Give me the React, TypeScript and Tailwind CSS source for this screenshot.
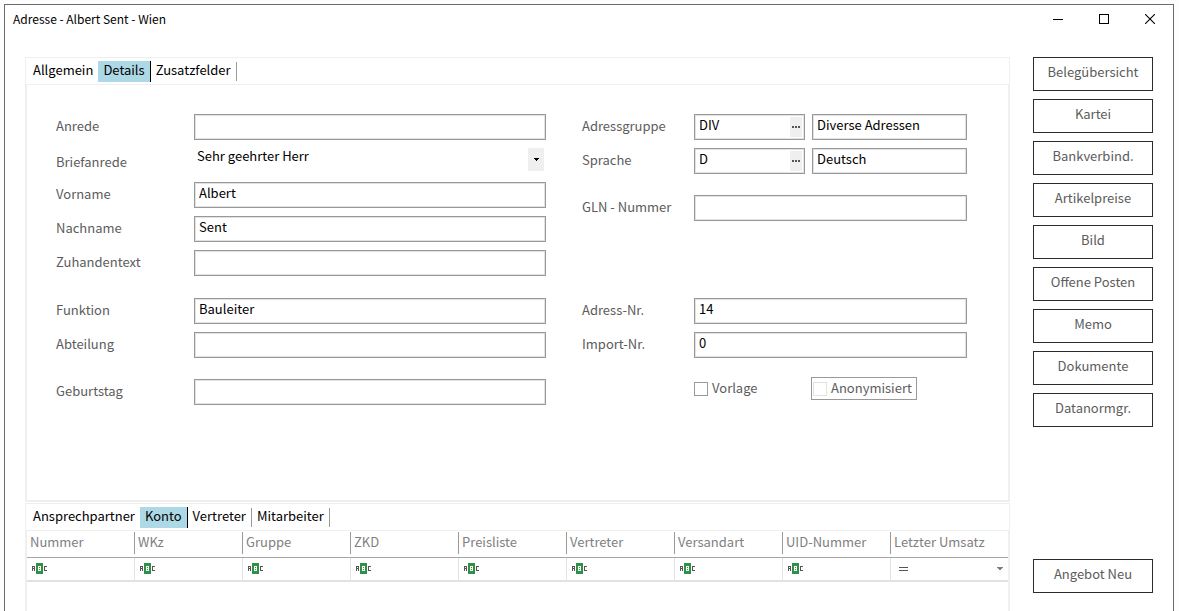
import { useState, type ReactNode } from "react";

const sideButtons = [
  "Belegübersicht",
  "Kartei",
  "Bankverbind.",
  "Artikelpreise",
  "Bild",
  "Offene Posten",
  "Memo",
  "Dokumente",
  "Datanormgr.",
];

const columns = [
  "Nummer",
  "WKz",
  "Gruppe",
  "ZKD",
  "Preisliste",
  "Vertreter",
  "Versandart",
  "UID-Nummer",
  "Letzter Umsatz",
];

const box = "h-[26px] w-full min-w-0 border border-[#999999] bg-white shadow-[inset_0_0_0_1px_#e2e2e2]";

function Row({ id, label, children }: { id: string; label: string; children: ReactNode }) {
  return (
    <div className="flex items-center">
      <label htmlFor={id} className="w-[112px] shrink-0 pb-[2px] text-[#5c5c5c]">
        {label}
      </label>
      <div className="min-w-0 flex-1">{children}</div>
    </div>
  );
}

function WideRow({ id, label, children }: { id: string; label: string; children: ReactNode }) {
  return (
    <div className="flex items-center">
      <label htmlFor={id} className="w-[138px] shrink-0 pb-[2px] text-[#5c5c5c]">
        {label}
      </label>
      <div className="min-w-0 flex-1">{children}</div>
    </div>
  );
}

function TextBox({ id, label, value = "" }: { id: string; label?: string; value?: string }) {
  return (
    <input
      id={id}
      type="text"
      aria-label={label}
      defaultValue={value}
      className={`${box} px-1 pb-[5px] text-black outline-none`}
    />
  );
}

function LookupBox({ id, value }: { id: string; value: string }) {
  return (
    <div className={`${box} flex items-center pr-[2px] pl-1`}>
      <input id={id} type="text" defaultValue={value} className="min-w-0 flex-1 pb-1 text-black outline-none" />
      <button type="button" aria-label="Auswahl" className="flex h-5 w-3 items-center justify-center bg-[#efefef]">
        <svg width="8" height="2" shapeRendering="crispEdges" fill="#555555">
          <rect x="0" width="2" height="2" />
          <rect x="3" width="2" height="2" />
          <rect x="6" width="2" height="2" />
        </svg>
      </button>
    </div>
  );
}

function Tabs({ items, initial }: { items: string[]; initial: string }) {
  const [active, setActive] = useState(initial);
  const activeIndex = items.indexOf(active);
  return (
    <div className="flex h-[26px] items-center pl-[2px]">
      {items.map((item, i) => (
        <button
          key={item}
          type="button"
          onClick={() => setActive(item)}
          className={
            i === activeIndex
              ? "h-[21px] border-r border-black bg-[#add8e6] px-[5px] pb-[3px] leading-[18px] text-black"
              : i === activeIndex - 1
                ? "h-[21px] px-[5px] pb-[3px] leading-[18px] text-black"
                : "h-[19px] border-r border-[#999999] px-[5px] pb-[3px] leading-4 text-black"
          }
        >
          {item}
        </button>
      ))}
    </div>
  );
}

/* Filter icon: A, highlighted B, C */
function AbcIcon() {
  return (
    <svg width="16" height="11" shapeRendering="crispEdges">
      <path d="M0 3h3v5h-1v-2h-1v2h-1zM1 4v1h1v-1z" fill="#555555" fillRule="evenodd" />
      <rect x="4" y="0" width="7" height="11" fill="#2f9148" />
      <path d="M6 3h3v5h-3z" fill="#ffffff" />
      <path d="M7 4h1v1h-1zM7 6h1v1h-1z" fill="#2f9148" />
      <path d="M12 3h3v1h-2v3h2v1h-3z" fill="#555555" />
    </svg>
  );
}

export default function App() {
  return (
    <div className="flex min-h-screen flex-col bg-[#fdfdfd] pt-1 pr-[5px] pl-1 font-['Noto_Sans_CJK_SC','Noto_Sans',sans-serif] text-[13px] leading-5">
      <div className="flex flex-1 flex-col border border-b-0 border-[#6b6b6b] bg-white">
        {/* Title bar */}
        <header className="flex h-7 items-center justify-between pl-2">
          <h1 className="text-xs text-black">Adresse - Albert Sent - Wien</h1>
          <div className="flex">
            <button type="button" aria-label="Minimieren" className="flex h-7 w-[46px] items-center justify-center">
              <svg width="10" height="10" shapeRendering="crispEdges">
                <path d="M0 5h10v1h-10z" />
              </svg>
            </button>
            <button type="button" aria-label="Maximieren" className="flex h-7 w-[46px] items-center justify-center">
              <svg width="10" height="10" shapeRendering="crispEdges">
                <rect x="0.5" y="0.5" width="9" height="9" fill="none" stroke="black" />
              </svg>
            </button>
            <button type="button" aria-label="Schließen" className="flex h-7 w-[46px] items-center justify-center">
              <svg width="10" height="10">
                <path d="M0 0l10 10M10 0l-10 10" stroke="black" strokeWidth="1.1" />
              </svg>
            </button>
          </div>
        </header>

        <div className="flex flex-1 gap-[23px] px-5 pt-6">
          <main className="flex min-w-0 flex-1 flex-col gap-px">
            {/* Address details */}
            <section className="border border-[#efefef]">
              <Tabs items={["Allgemein", "Details", "Zusatzfelder"]} initial="Details" />
              <form className="grid grid-cols-[490fr_385fr] gap-9 border border-[#efefef] pt-[29px] pr-[41px] pb-[95px] pl-[29px]">
                <div className="flex min-w-0 flex-col gap-2">
                  <WideRow id="anrede" label="Anrede">
                    <TextBox id="anrede" />
                  </WideRow>
                  <div className="flex h-[26px]">
                    <label htmlFor="briefanrede" className="w-[138px] shrink-0 pt-1 text-[#5c5c5c]">
                      Briefanrede
                    </label>
                    <div className="relative flex-1">
                      <select
                        id="briefanrede"
                        className="block h-4 w-full appearance-none bg-white px-[3px] leading-4 text-black outline-none"
                      >
                        <option>Sehr geehrter Herr</option>
                        <option>Sehr geehrte Frau</option>
                      </select>
                      <span className="pointer-events-none absolute top-0 right-[2px] flex h-[23px] w-4 items-center justify-center bg-[#efefef]">
                        <svg width="5" height="3" shapeRendering="crispEdges">
                          <path d="M0 0h5v1h-5zM1 1h3v1h-3zM2 2h1v1h-1z" />
                        </svg>
                      </span>
                    </div>
                  </div>
                  <WideRow id="vorname" label="Vorname">
                    <TextBox id="vorname" value="Albert" />
                  </WideRow>
                  <WideRow id="nachname" label="Nachname">
                    <TextBox id="nachname" value="Sent" />
                  </WideRow>
                  <WideRow id="zuhanden" label="Zuhandentext">
                    <TextBox id="zuhanden" />
                  </WideRow>
                  <div className="mt-[14px] flex flex-col gap-2">
                    <WideRow id="funktion" label="Funktion">
                      <TextBox id="funktion" value="Bauleiter" />
                    </WideRow>
                    <WideRow id="abteilung" label="Abteilung">
                      <TextBox id="abteilung" />
                    </WideRow>
                  </div>
                  <div className="mt-[13px]">
                    <WideRow id="geburtstag" label="Geburtstag">
                      <TextBox id="geburtstag" />
                    </WideRow>
                  </div>
                </div>

                <div className="flex min-w-0 flex-col gap-2">
                  <Row id="adressgruppe" label="Adressgruppe">
                    <div className="grid grid-cols-[111fr_155fr] gap-[7px]">
                      <LookupBox id="adressgruppe" value="DIV" />
                      <TextBox id="adressgruppe-name" label="Adressgruppe Name" value="Diverse Adressen" />
                    </div>
                  </Row>
                  <Row id="sprache" label="Sprache">
                    <div className="grid grid-cols-[111fr_155fr] gap-[7px]">
                      <LookupBox id="sprache" value="D" />
                      <TextBox id="sprache-name" label="Sprache Name" value="Deutsch" />
                    </div>
                  </Row>
                  <div className="mt-[13px]">
                    <Row id="gln" label="GLN - Nummer">
                      <TextBox id="gln" />
                    </Row>
                  </div>
                  <div className="mt-[69px] flex flex-col gap-2">
                    <Row id="adressnr" label="Adress-Nr.">
                      <TextBox id="adressnr" value="14" />
                    </Row>
                    <Row id="importnr" label="Import-Nr.">
                      <TextBox id="importnr" value="0" />
                    </Row>
                  </div>
                  <div className="mt-[11px] grid grid-cols-[117px_1fr] items-center pl-[112px] text-[#5c5c5c]">
                    <label className="flex items-center gap-1">
                      <input type="checkbox" className="size-[14px] appearance-none border border-[#999999] bg-white checked:bg-[#add8e6]" />
                      <span className="pb-[2px]">Vorlage</span>
                    </label>
                    <label className="flex h-[23px] items-center gap-1 justify-self-start border border-[#999999] pr-1 pl-px">
                      <input type="checkbox" disabled className="size-[14px] appearance-none border border-[#e2e2e2] bg-white" />
                      <span className="pb-[2px]">Anonymisiert</span>
                    </label>
                  </div>
                </div>
              </form>
            </section>

            {/* Sub records */}
            <section className="flex flex-1 flex-col border border-b-0 border-[#efefef]">
              <Tabs items={["Ansprechpartner", "Konto", "Vertreter", "Mitarbeiter"]} initial="Konto" />
              <div className="flex-1 border border-b-0 border-[#efefef]">
                <table className="w-full table-fixed border-collapse">
                  <thead>
                    <tr className="h-[26px] border-b border-[#a6a6a6]">
                      {columns.map((name, i) => (
                        <th
                          key={name}
                          className={`p-0 pb-px text-left font-normal text-[#808080] ${i < 8 ? "w-[108px]" : ""}`}
                        >
                          <div className={`h-[22px] pl-[3px] leading-[19px] ${i < 8 ? "border-r border-[#999999]" : ""}`}>
                            {name}
                          </div>
                        </th>
                      ))}
                    </tr>
                  </thead>
                  <tbody>
                    <tr className="border-b-2 border-[#e2e2e2]">
                      {columns.map((name, i) => (
                        <td key={name} className="p-0">
                          <div className={`flex h-[22px] items-center pl-[5px] ${i < 8 ? "border-r border-[#e2e2e2]" : ""}`}>
                            {i < 8 ? (
                              <>
                                <AbcIcon />
                                <input type="text" aria-label={name} className="min-w-0 flex-1 px-1 outline-none" />
                              </>
                            ) : (
                              <>
                                <svg width="15" height="4" shapeRendering="crispEdges" fill="#555555">
                                  <path d="M3 0h9v1h-9zM3 3h9v1h-9z" />
                                </svg>
                                <input type="text" aria-label={name} className="min-w-0 flex-1 px-1 outline-none" />
                                <button type="button" aria-label="Liste öffnen" className="pr-[5px]">
                                  <svg width="6" height="3" fill="#808080" shapeRendering="crispEdges">
                                    <path d="M0 0h6v1h-6zM1 1h4v1h-4zM2 2h2v1h-2z" />
                                  </svg>
                                </button>
                              </>
                            )}
                          </div>
                        </td>
                      ))}
                    </tr>
                  </tbody>
                </table>
              </div>
            </section>
          </main>

          {/* Actions */}
          <aside className="flex w-[120px] flex-col gap-2 pb-[18px] text-[#5c5c5c]">
            {sideButtons.map((label) => (
              <button key={label} type="button" className="h-[34px] border border-[#2b2b2b] bg-white pb-[5px]">
                {label}
              </button>
            ))}
            <button type="button" className="mt-auto h-[34px] border border-[#2b2b2b] bg-white pb-[5px]">
              Angebot Neu
            </button>
          </aside>
        </div>
      </div>
    </div>
  );
}
